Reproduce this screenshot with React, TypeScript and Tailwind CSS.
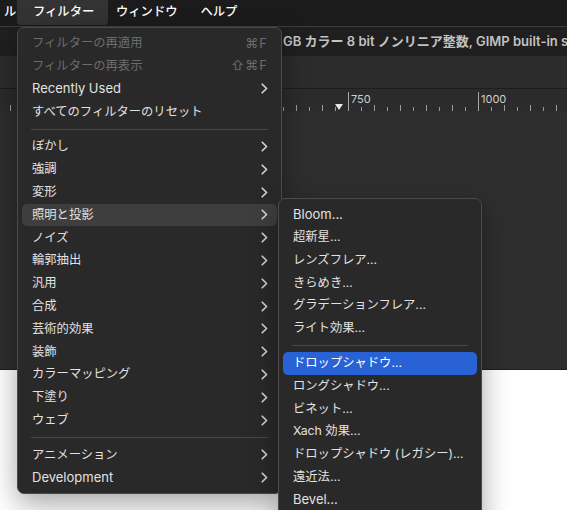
import React from "react";

type Entry =
  | { kind: "sep" }
  | { kind: "item"; label: string; shortcut?: string; sub?: boolean; disabled?: boolean; active?: boolean };

const mainMenu: Entry[] = [
  { kind: "item", label: "フィルターの再適用", shortcut: "⌘F", disabled: true },
  { kind: "item", label: "フィルターの再表示", shortcut: "⇧⌘F", disabled: true },
  { kind: "item", label: "Recently Used", sub: true },
  { kind: "item", label: "すべてのフィルターのリセット" },
  { kind: "sep" },
  { kind: "item", label: "ぼかし", sub: true },
  { kind: "item", label: "強調", sub: true },
  { kind: "item", label: "変形", sub: true },
  { kind: "item", label: "照明と投影", sub: true, active: true },
  { kind: "item", label: "ノイズ", sub: true },
  { kind: "item", label: "輪郭抽出", sub: true },
  { kind: "item", label: "汎用", sub: true },
  { kind: "item", label: "合成", sub: true },
  { kind: "item", label: "芸術的効果", sub: true },
  { kind: "item", label: "装飾", sub: true },
  { kind: "item", label: "カラーマッピング", sub: true },
  { kind: "item", label: "下塗り", sub: true },
  { kind: "item", label: "ウェブ", sub: true },
  { kind: "sep" },
  { kind: "item", label: "アニメーション", sub: true },
  { kind: "item", label: "Development", sub: true },
];

const lightMenu: Entry[] = [
  { kind: "item", label: "Bloom..." },
  { kind: "item", label: "超新星..." },
  { kind: "item", label: "レンズフレア..." },
  { kind: "item", label: "きらめき..." },
  { kind: "item", label: "グラデーションフレア..." },
  { kind: "item", label: "ライト効果..." },
  { kind: "sep" },
  { kind: "item", label: "ドロップシャドウ...", active: true },
  { kind: "item", label: "ロングシャドウ..." },
  { kind: "item", label: "ビネット..." },
  { kind: "item", label: "Xach 効果..." },
  { kind: "item", label: "ドロップシャドウ (レガシー)..." },
  { kind: "item", label: "遠近法..." },
  { kind: "item", label: "Bevel..." },
];

// latin-only labels get the slightly larger size, CJK glyphs run a bit small
const isLatin = (s: string) => /^[\x20-\x7e]+$/.test(s);

function Chevron() {
  return (
    <svg width="7" height="11" viewBox="0 0 7 11" className="shrink-0">
      <path d="M1.2 1.2 L5.6 5.5 L1.2 9.8" fill="none" stroke="#d6d6d6" strokeWidth="1.6" strokeLinecap="round" strokeLinejoin="round" />
    </svg>
  );
}

function Separator() {
  return (
    <div className="h-[12px] flex items-center px-[13px]">
      <div className="h-px w-full bg-[#474747]" />
    </div>
  );
}

function MainMenu() {
  return (
    <div className="absolute left-[17px] top-[27px] w-[265px] rounded-[7px] border border-[#4a4a4a] bg-[#292929] py-[4px] shadow-[0_10px_28px_rgba(0,0,0,0.35)]">
      {mainMenu.map((e, i) =>
        e.kind === "sep" ? (
          <Separator key={i} />
        ) : (
          <div
            key={i}
            className={`h-[22.8px] mx-[4px] pl-[10px] pr-[9px] rounded-[5px] flex items-center justify-between ${
              e.active ? "bg-[#3e3e3e]" : ""
            } ${e.disabled ? "text-[#6c6c6c]" : "text-[#e2e2e2]"}`}
          >
            <span className={isLatin(e.label) ? "text-[13px]" : ""}>{e.label}</span>
            {e.shortcut && <span className="text-[13px] text-[#6c6c6c] tracking-[1px]">{e.shortcut}</span>}
            {e.sub && <Chevron />}
          </div>
        )
      )}
    </div>
  );
}

function SubMenu() {
  return (
    <div className="absolute left-[278px] top-[198px] w-[204px] h-[340px] rounded-[7px] border border-[#4a4a4a] bg-[#292929] py-[4px] shadow-[0_10px_28px_rgba(0,0,0,0.35)]">
      {lightMenu.map((e, i) =>
        e.kind === "sep" ? (
          <Separator key={i} />
        ) : (
          <div
            key={i}
            className={`h-[22.8px] mx-[4px] px-[10px] rounded-[5px] flex items-center ${
              e.active ? "bg-[#2862d4] text-white" : "text-[#e2e2e2]"
            }`}
          >
            <span className={isLatin(e.label) ? "text-[13px]" : ""}>{e.label}</span>
          </div>
        )
      )}
    </div>
  );
}

function Ruler() {
  const ticks: number[] = [];
  for (let x = 10; x < 567; x += 13) ticks.push(x);
  return (
    <svg width="567" height="22" className="block">
      {ticks.map((x, i) => {
        const major = x === 348 || x === 478;
        const h = major ? 19 : i % 2 === 0 ? 6 : 4;
        return <line key={x} x1={x + 0.5} x2={x + 0.5} y1={22 - h} y2={22} stroke={major ? "#a8a8a8" : "#9a9a9a"} strokeWidth="1" />;
      })}
      <text x="351" y="14" fontSize="11" fill="#cfcfcf" fontFamily="Inter, sans-serif">750</text>
      <text x="481" y="14" fontSize="11" fill="#cfcfcf" fontFamily="Inter, sans-serif">1000</text>
      <path d="M335 15 L343 15 L339 21 Z" fill="#e6e6e6" />
    </svg>
  );
}

export default function App() {
  return (
    <div className="relative w-[567px] h-[510px] overflow-hidden bg-white text-[12.3px] font-['Inter','Noto_Sans_CJK_JP',sans-serif]">
      {/* menu bar */}
      <div className="h-[26px] bg-[#1b1b1b] flex items-start text-white font-medium">
        <span className="w-[17px] h-[25px] pl-[4px] flex items-center">ル</span>
        <span className="w-[91px] h-[25px] pl-[16px] bg-[#333333] rounded-b-[4px] flex items-center">フィルター</span>
        <span className="h-[25px] ml-[8px] flex items-center">ウィンドウ</span>
        <span className="h-[25px] ml-[23px] flex items-center">ヘルプ</span>
      </div>

      {/* title strip */}
      <div className="h-[30px] border-t border-[#3d3d3d] bg-[#1f1f1f] flex items-center pl-[283px] whitespace-nowrap overflow-hidden">
        <span className="text-[13px] font-semibold text-[#c2c2c2]">GB カラー 8 bit ノンリニア整数, GIMP built-in sRGB</span>
      </div>

      {/* tool options area */}
      <div className="h-[32px] bg-[#2c2c2c]" />

      {/* ruler */}
      <div className="h-[23px] border-t border-[#1d1d1d] bg-[#2b2b2b]">
        <Ruler />
      </div>

      {/* canvas surround */}
      <div className="h-[259px] bg-[#2e2e2e] border-b border-[#1f1f1f]" />

      {/* image */}
      <div className="h-[140px] bg-white" />

      <MainMenu />
      <SubMenu />
    </div>
  );
}
